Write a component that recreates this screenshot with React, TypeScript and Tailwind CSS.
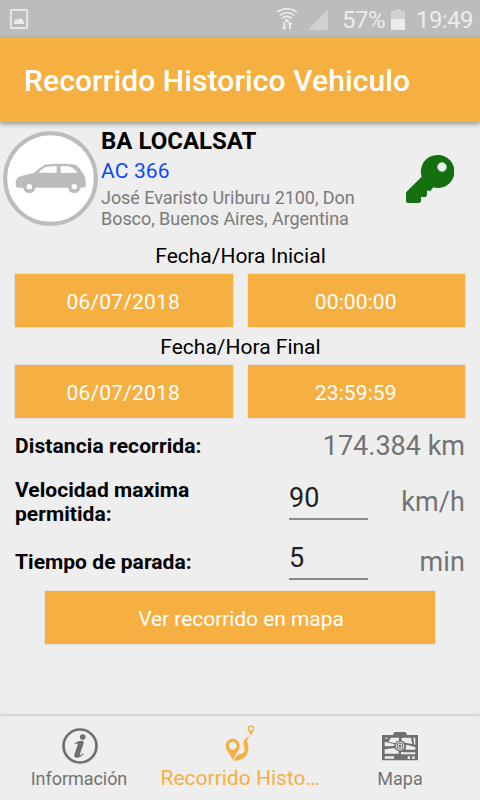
import type { ReactNode } from 'react'
import clsx from 'clsx'

function StatusBar() {
  return (
    <div className="flex h-[38px] items-center bg-[#bcbcbc] text-2xl text-[#ececec]">
      <svg className="ml-2.5 h-5 w-[18px]" viewBox="0 0 54 60">
        <rect x="2.5" y="2.5" width="49" height="55" rx="3" fill="none" stroke="#ececec" strokeWidth="5" />
        <path fill="#ececec" d="M12 45V38l7-9 5 4 8-7 10 12v7z" />
      </svg>
      <svg className="ml-[248px] h-[22px] w-[22px]" viewBox="0 0 66 66">
        <g fill="none" stroke="#ececec" strokeWidth="5">
          <path d="M3 12Q33-8 63 12" />
          <path d="M11 22Q33 5 55 22" />
          <path d="M19 31Q33 19 47 31" />
        </g>
        <path fill="#ececec" d="M25 37Q33 29 41 37L33 44z" />
        <path fill="#ececec" d="M22 42h6v15h5l-8 9-8-9h5zM39 63h6V49h6l-9-9-9 9h6z" />
      </svg>
      <svg className="ml-2.5 h-[21px] w-5" viewBox="0 0 20 21">
        <path fill="#d0d0d0" d="M0 21L20 0v21z" />
      </svg>
      <span className="ml-[14px] w-12 pt-px leading-[38px] tracking-[-0.5px]">57%</span>
      <svg className="ml-px h-[21px] w-[14px]" viewBox="0 0 14 21">
        <path fill="#d2d2d2" d="M0 2h4V0h6v2h4v8H0z" />
        <path fill="#ececec" d="M0 10h14v11H0z" />
      </svg>
      <span className="ml-[11px] pt-px leading-[38px] tracking-[-0.6px]">19:49</span>
    </div>
  )
}

function CarAvatar() {
  return (
    <svg className="h-[95px] w-[95px] shrink-0" viewBox="0 0 285 285">
      <circle cx="142.5" cy="142.5" r="136" fill="#fff" stroke="#bcbcbc" strokeWidth="12" />
      <path
        fill="#bcbcbc"
        d="M39 167c-2-12-1-22 6-28 12-6 30-9 46-12 9-8 22-18 33-25 8-3 26-4 47-4 20 0 37 0 46 3 9 5 20 19 26 31 4 6 5 12 5 18v16c0 3-5 4-12 4H55c-8 0-15-1-16-3z"
      />
      <path fill="#fff" d="M107 125c6-6 12-13 19-16 9-2 20-3 35-3v19zM173 106c12 0 23 0 31 2 7 4 15 11 20 17l-51 1z" />
      <circle cx="79" cy="167" r="19" fill="#bcbcbc" />
      <circle cx="79" cy="167" r="8" fill="#fff" />
      <circle cx="214" cy="167" r="19" fill="#bcbcbc" />
      <circle cx="214" cy="167" r="8" fill="#fff" />
    </svg>
  )
}

function KeyIcon() {
  return (
    <svg className="h-12 w-12" viewBox="0 0 144 144">
      <path
        fill="#15710f"
        fillRule="evenodd"
        d="M94 0a49.5 49.5 0 1 1-12 97l-8 10H63v11q0 8-7 8H45v11q0 7-7 7H7q-7 0-7-7v-25L47 65A49.5 49.5 0 0 1 94 0zM108 22a14 14 0 1 0 .1 0z"
      />
    </svg>
  )
}

function InfoIcon() {
  return (
    <svg className="h-9 w-9" viewBox="0 0 108 108">
      <circle cx="54" cy="54" r="49.5" fill="none" stroke="#6f6f6f" strokeWidth="8" />
      <circle cx="62" cy="27" r="8.5" fill="#6f6f6f" />
      <path
        fill="#6f6f6f"
        d="M38 46c8-6 15-8 22-8 4 0 6 3 5 7L54 78c-1 4 1 4 3 3l6-5 2 2c-6 7-14 11-21 11-6 0-8-4-7-9l10-30c1-4-1-4-4-3l-4 2z"
      />
    </svg>
  )
}

function RouteIcon() {
  return (
    <svg className="h-9 w-[30px]" viewBox="0 0 90 108">
      <g fill="#f6af41" fillRule="evenodd">
        <path d="M23 107C17 86 2 78 2 62a21 21 0 0 1 42 0C44 78 28 88 23 107zM23 50a12 12 0 1 0 .1 0z" />
        <path d="M78 33C76 24 68 19 68 11a10 10 0 0 1 20 0c0 8-8 13-10 22zM78 5a6 6 0 1 0 .1 0z" />
        <path d="M27 107c2-8 8-16 17-19 12-3 16-8 15-16-1-8-5-11-3-20 1-9 10-16 19-18-8 7-10 12-8 19 3 7 5 15 2 26-4 17-18 29-42 28z" />
      </g>
    </svg>
  )
}

function MapIcon() {
  return (
    <svg className="h-9 w-9" viewBox="0 0 108 108">
      <path fill="#6f6f6f" d="M0 21h33q1-8 6-9h30q5 1 6 9h33v76H0z" />
      <path
        fill="#ededed"
        d="M8 29h12l-9 4zM27 29h24v9q-8 1-12 8l-20-5zM59 29h28l4 19-22-4q-3-5-10-6zM94 29h6v21l-4-1zM8 41l30 8q-2 3-2 5L8 55zM72 50l28 7v8H71zM8 64l29-4q4 9 13 10v7H8zM57 71l9 2h34v6H57zM8 85h28v7H8zM77 85h7v8h-7zM91 85h7v8h-7z"
      />
      <circle cx="54" cy="54" r="13" fill="#ededed" />
      <circle cx="54" cy="54" r="9" fill="none" stroke="#6f6f6f" strokeWidth="3" />
      <rect x="50" y="50" width="8" height="8" fill="#6f6f6f" />
    </svg>
  )
}

function ActionButton({ children, className }: { children: ReactNode; className?: string }) {
  return (
    <button
      className={clsx(
        'h-[53px] bg-[#f6af41] pt-1 text-[21px] text-white shadow-[0_0_1px_rgba(0,0,0,0.3)]',
        className
      )}
    >
      {children}
    </button>
  )
}

interface DateRowProps {
  label: string
  date: string
  time: string
}

function DateRow({ label, date, time }: DateRowProps) {
  return (
    <div>
      <div className="h-[38px] pl-px text-center text-[21px] leading-10 text-black">{label}</div>
      <div className="flex gap-[15px]">
        <ActionButton className="flex-1 pr-px tracking-[0.2px]">{date}</ActionButton>
        <ActionButton className="flex-1 pr-px tracking-[0.1px]">{time}</ActionButton>
      </div>
    </div>
  )
}

function LimitRow({ label, value, unit }: { label: string; value: string; unit: string }) {
  return (
    <div className="flex h-[60px] items-center">
      <div className="w-[274px] pr-16 text-[21px] leading-6 font-bold tracking-[0.04px] text-black">{label}</div>
      <input
        className="mt-[-3px] h-[38px] w-[79px] border-b-2 border-[#8a8a8a] pb-0.5 text-[27px] text-[#212121] outline-none"
        defaultValue={value}
      />
      <div className="flex-1 text-right text-[27px] tracking-[0.1px] text-[#737373]">{unit}</div>
    </div>
  )
}

export default function App() {
  return (
    <div className="flex h-[800px] w-[480px] flex-col overflow-hidden bg-[#eeeeee] font-[Roboto,sans-serif]">
      <StatusBar />
      <header className="z-10 flex h-[84px] items-center bg-[#f6af41] pl-6 text-[30px] font-medium tracking-[0.1px] text-white shadow-[0_2px_5px_rgba(0,0,0,0.4)]">
        Recorrido Historico Vehiculo
      </header>

      <main className="flex-1">
        {/* Vehicle summary */}
        <section className="flex h-[114px] pl-[3px] pt-[9px]">
          <CarAvatar />
          <div className="-mt-1 ml-[3px] w-[290px]">
            <div className="text-2xl leading-[28px] font-bold text-black">BA LOCALSAT</div>
            <div className="text-[21px] leading-[32px] tracking-[0.15px] text-[#0b46fa]">AC 366</div>
            <div className="w-[270px] text-[18px] leading-[21px] tracking-[-0.05px] text-[#7b7b7b]">
              José Evaristo Uriburu 2100, Don Bosco, Buenos Aires, Argentina
            </div>
          </div>
          <div className="ml-[15px] mt-6">
            <KeyIcon />
          </div>
        </section>

        <section className="px-[15px]">
          <DateRow label="Fecha/Hora Inicial" date="06/07/2018" time="00:00:00" />
          <DateRow label="Fecha/Hora Final" date="06/07/2018" time="23:59:59" />

          <div className="flex h-[54px] items-center justify-between">
            <span className="pt-[3px] text-[21px] font-bold tracking-[0.1px] text-black">Distancia recorrida:</span>
            <span className="pt-0.5 text-[27px] text-[#737373]">174.384 km</span>
          </div>
          <LimitRow label="Velocidad maxima permitida:" value="90" unit="km/h" />
          <LimitRow label="Tiempo de parada:" value="5" unit="min" />
        </section>

        <ActionButton className="-mt-px ml-[45px] block w-[390px] pl-0.5 tracking-[-0.05px]">
          Ver recorrido en mapa
        </ActionButton>
      </main>

      {/* Bottom tabs */}
      <nav className="grid h-[84px] shrink-0 grid-cols-3 bg-[#eeeeee] text-[18px] text-[#737373] shadow-[0_-1px_3px_rgba(0,0,0,0.2)]">
        <div className="flex flex-col items-center pt-3">
          <InfoIcon />
          <span className="mt-[3px] mr-0.5 leading-6 tracking-[-0.05px]">Información</span>
        </div>
        <div className="flex flex-col items-center pt-[9px]">
          <RouteIcon />
          <span className="mt-[3px] text-[21px] leading-7 whitespace-nowrap text-[#f6af41]">Recorrido Histo…</span>
        </div>
        <div className="flex flex-col items-center pt-3">
          <MapIcon />
          <span className="mt-[3px] leading-6">Mapa</span>
        </div>
      </nav>
    </div>
  )
}
